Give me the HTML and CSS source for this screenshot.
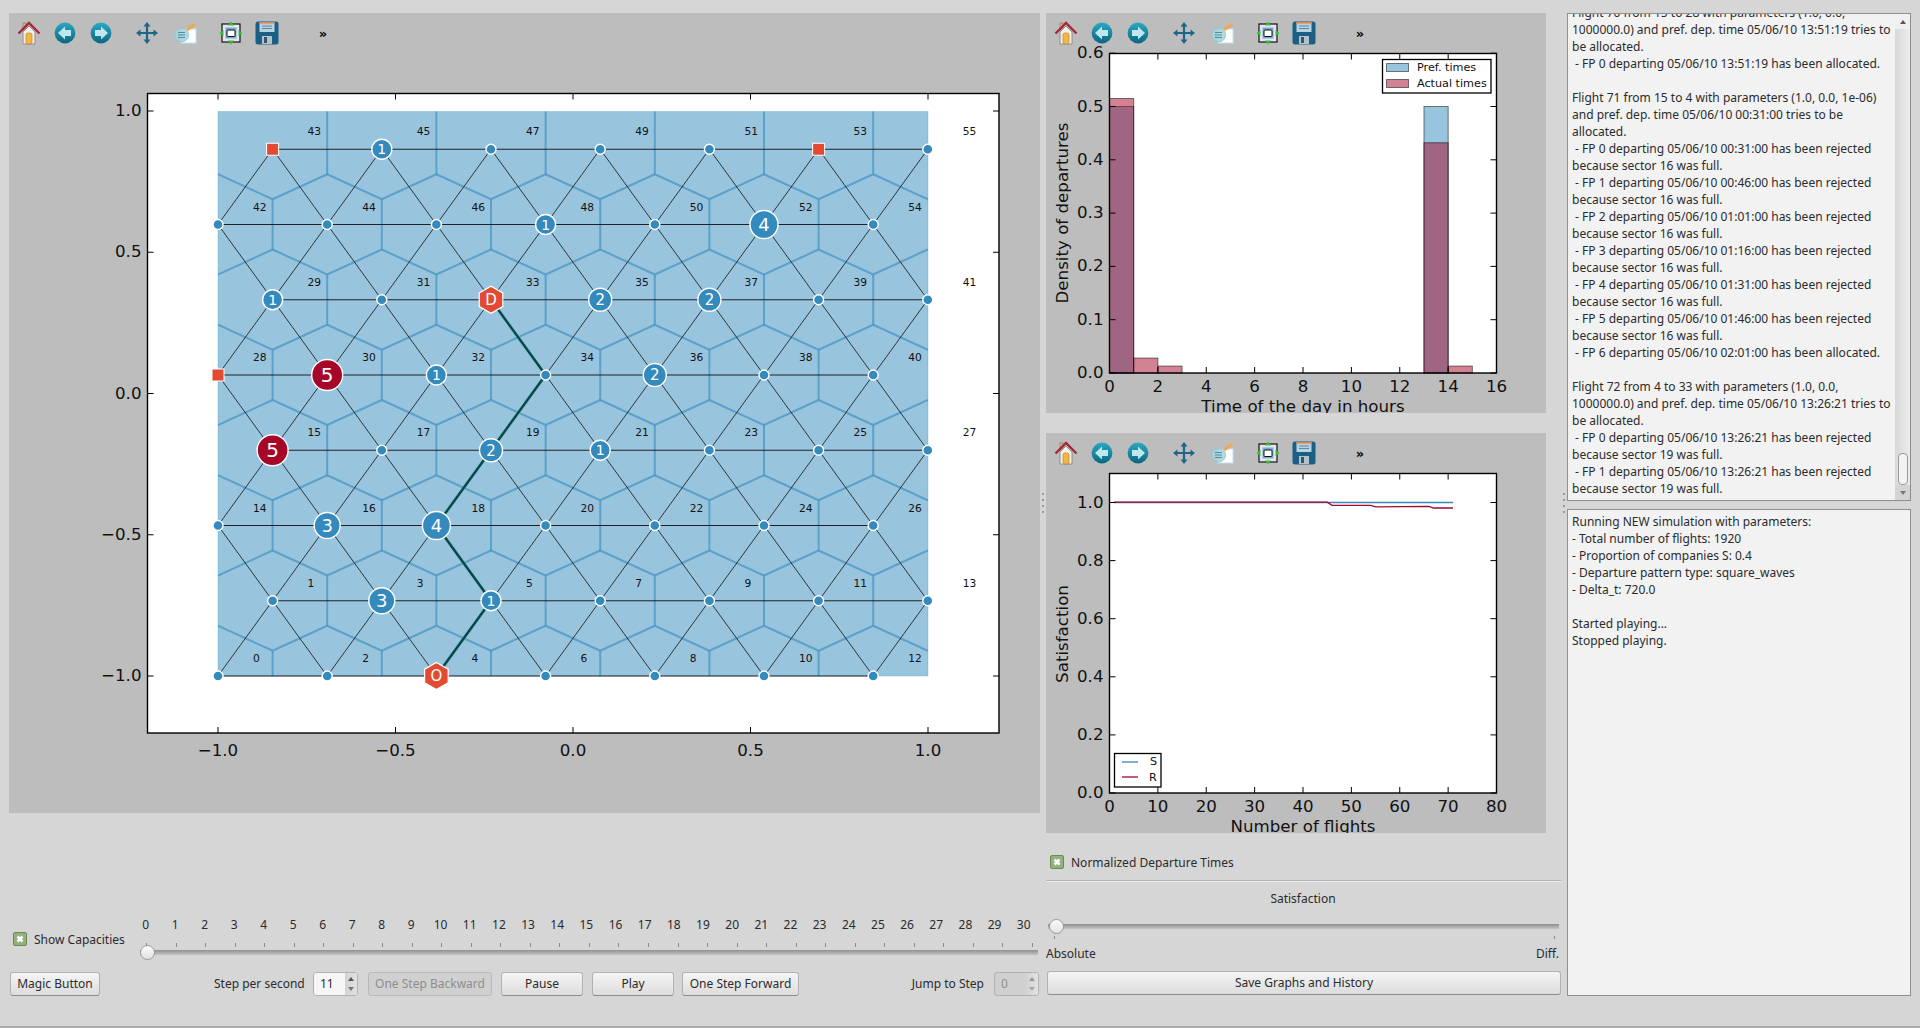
FILE: index.html
```html
<!DOCTYPE html>
<html lang="en">
<head>
    <meta charset="UTF-8">
    <title>Simulation</title>
    <link rel="stylesheet" href="styles.css">
</head>
<body>
<svg class="icon-defs" width="0" height="0">
    <defs>
        <linearGradient id="ballGrad" x1="0" y1="0" x2="0" y2="1">
            <stop offset="0" stop-color="#2aa9c2"/>
            <stop offset="1" stop-color="#0b6680"/>
        </linearGradient>
        <symbol id="i-home" viewBox="0 0 24 24">
            <rect x="6" y="2" width="3" height="7" fill="#d9b98c" stroke="#8a6a4a" stroke-width=".6"/>
            <path d="M6 11 L12 5 L18 11 V23 H6Z" fill="#f2efe6" stroke="#8c8c8c"/>
            <rect x="9" y="12" width="6" height="11" rx="2" fill="#f3b544" stroke="#b9852a" stroke-width=".7"/>
            <path d="M1.5 12.5 L12 2 L22.5 12.5" fill="none" stroke="#a3273f" stroke-width="2.4"/>
        </symbol>
        <symbol id="i-back" viewBox="0 0 24 24">
            <circle cx="12" cy="12" r="10.4" fill="url(#ballGrad)"/>
            <path d="M5 12 L12 5.5 V9 H18 V15 H12 V18.5Z" fill="#bfe7ee"/>
        </symbol>
        <symbol id="i-forward" viewBox="0 0 24 24">
            <circle cx="12" cy="12" r="10.4" fill="url(#ballGrad)"/>
            <path d="M19 12 L12 5.5 V9 H6 V15 H12 V18.5Z" fill="#bfe7ee"/>
        </symbol>
        <symbol id="i-move" viewBox="0 0 24 24">
            <path d="M12 3 V21 M3 12 H21" stroke="#1d6688" stroke-width="2.2"/>
            <path d="M12 1 L15.5 5.5 H8.5Z M12 23 L15.5 18.5 H8.5Z M1 12 L5.5 8.5 V15.5Z M23 12 L18.5 8.5 V15.5Z" fill="#1d6688"/>
        </symbol>
        <symbol id="i-edit" viewBox="0 0 24 24">
            <rect x="8" y="8" width="15" height="14" fill="#fff" stroke="#bfe3f0"/>
            <circle cx="8.5" cy="14" r="7" fill="#a9d4da" stroke="#8ec5d0" opacity=".9"/>
            <path d="M5 11.5 H12 M5 14 H12 M5 16.5 H12" stroke="#4e8ea2" stroke-width="1"/>
            <path d="M14 9 L22 3" stroke="#eea858" stroke-width="3.4"/>
        </symbol>
        <symbol id="i-subplots" viewBox="0 0 24 24">
            <rect x="3" y="3" width="18" height="18" fill="#e4e8ee" stroke="#111" stroke-width="1.2"/>
            <rect x="6.5" y="6.5" width="11" height="11" fill="#7da6d8"/>
            <rect x="8" y="9" width="8" height="6.5" rx="1" fill="#fff" stroke="#111"/>
            <path d="M12 .5 L15 4.5 H9Z M12 23.5 L15 19.5 H9Z M.5 12 L4.5 9 V15Z M23.5 12 L19.5 9 V15Z" fill="#2fc22f"/>
        </symbol>
        <symbol id="i-save" viewBox="0 0 24 24">
            <rect x=".5" y=".5" width="23" height="23" rx="2.5" fill="#1c5f86"/>
            <rect x="4.5" y="1" width="15" height="10" fill="#b9d2e0"/>
            <rect x="4.5" y="1" width="15" height="1.6" fill="#e08a4a"/>
            <path d="M7 5 H17 M7 7.5 H17" stroke="#5a8aa6"/>
            <rect x="7" y="15" width="10" height="8" fill="#b5c2ca"/>
            <rect x="9" y="16" width="3" height="6" fill="#34566c"/>
        </symbol>
        <symbol id="i-check" viewBox="0 0 14 14">
            <rect x=".5" y=".5" width="13" height="13" rx="1.5" fill="#93b27b" stroke="#6b8a58"/>
            <path d="M4.5 4.5 L9.5 9.5 M9.5 4.5 L4.5 9.5" stroke="#fff" stroke-width="2.6"/>
        </symbol>
    </defs>
</svg>

<div class="window">
    <div class="col-left">
        <div class="plot-panel main-panel">
            <div class="toolbar">
                <svg class="tool"><use href="#i-home"/></svg>
                <svg class="tool"><use href="#i-back"/></svg>
                <svg class="tool"><use href="#i-forward"/></svg>
                <svg class="tool gap-big"><use href="#i-move"/></svg>
                <svg class="tool gap-edit"><use href="#i-edit"/></svg>
                <svg class="tool gap-big"><use href="#i-subplots"/></svg>
                <svg class="tool"><use href="#i-save"/></svg>
                <span class="more">»</span>
            </div>
            <svg id="netPlot" class="plot" viewBox="9 53 1031 760" width="1031" height="760"></svg>
        </div>

        <div class="step-row">
            <label class="check check-capacities"><svg class="checkbox"><use href="#i-check"/></svg>Show Capacities</label>
            <div class="step-slider">
                <div class="step-labels" id="stepLabels"></div>
                <div class="step-ticks"></div>
                <div class="slider step-groove"><span class="handle"></span></div>
            </div>
        </div>

        <div class="button-row">
            <button class="btn btn-magic">Magic Button</button>
            <span class="field-label label-step">Step per second</span>
            <div class="spin"><span class="spin-value">11</span><span class="spin-arrows"><i class="up"></i><i class="down"></i></span></div>
            <button class="btn btn-back" disabled>One Step Backward</button>
            <button class="btn btn-pause">Pause</button>
            <button class="btn btn-play">Play</button>
            <button class="btn btn-forward">One Step Forward</button>
            <span class="field-label label-jump">Jump to Step</span>
            <div class="spin spin-off"><span class="spin-value">0</span><span class="spin-arrows"><i class="up"></i><i class="down"></i></span></div>
        </div>
    </div>

    <div class="splitter"></div>

    <div class="col-mid">
        <div class="plot-panel side-panel">
            <div class="toolbar">
                <svg class="tool"><use href="#i-home"/></svg>
                <svg class="tool"><use href="#i-back"/></svg>
                <svg class="tool"><use href="#i-forward"/></svg>
                <svg class="tool gap-big"><use href="#i-move"/></svg>
                <svg class="tool gap-edit"><use href="#i-edit"/></svg>
                <svg class="tool gap-big"><use href="#i-subplots"/></svg>
                <svg class="tool"><use href="#i-save"/></svg>
                <span class="more">»</span>
            </div>
            <svg id="histPlot" class="plot" viewBox="1046 53 500 360" width="500" height="360"></svg>
        </div>
        <div class="plot-panel side-panel second">
            <div class="toolbar">
                <svg class="tool"><use href="#i-home"/></svg>
                <svg class="tool"><use href="#i-back"/></svg>
                <svg class="tool"><use href="#i-forward"/></svg>
                <svg class="tool gap-big"><use href="#i-move"/></svg>
                <svg class="tool gap-edit"><use href="#i-edit"/></svg>
                <svg class="tool gap-big"><use href="#i-subplots"/></svg>
                <svg class="tool"><use href="#i-save"/></svg>
                <span class="more">»</span>
            </div>
            <svg id="satPlot" class="plot" viewBox="1046 473 500 360" width="500" height="360"></svg>
        </div>

        <label class="check check-norm"><svg class="checkbox"><use href="#i-check"/></svg>Normalized Departure Times</label>
        <div class="separator"></div>
        <div class="sat-title">Satisfaction</div>
        <div class="slider sat-groove"><span class="handle"></span></div>
        <div class="sat-ticks"></div>
        <div class="sat-labels"><span>Absolute</span><span>Diff.</span></div>
        <button class="btn btn-save">Save Graphs and History</button>
    </div>

    <div class="splitter"></div>

    <div class="col-right">
        <div class="log-box log-top">
            <div class="log-view"><div class="log-text scrolled">Flight 70 from 15 to 28 with parameters (1.0, 0.0,
1000000.0) and pref. dep. time 05/06/10 13:51:19 tries to
be allocated.
 - FP 0 departing 05/06/10 13:51:19 has been allocated.

Flight 71 from 15 to 4 with parameters (1.0, 0.0, 1e-06)
and pref. dep. time 05/06/10 00:31:00 tries to be
allocated.
 - FP 0 departing 05/06/10 00:31:00 has been rejected
because sector 16 was full.
 - FP 1 departing 05/06/10 00:46:00 has been rejected
because sector 16 was full.
 - FP 2 departing 05/06/10 01:01:00 has been rejected
because sector 16 was full.
 - FP 3 departing 05/06/10 01:16:00 has been rejected
because sector 16 was full.
 - FP 4 departing 05/06/10 01:31:00 has been rejected
because sector 16 was full.
 - FP 5 departing 05/06/10 01:46:00 has been rejected
because sector 16 was full.
 - FP 6 departing 05/06/10 02:01:00 has been allocated.

Flight 72 from 4 to 33 with parameters (1.0, 0.0,
1000000.0) and pref. dep. time 05/06/10 13:26:21 tries to
be allocated.
 - FP 0 departing 05/06/10 13:26:21 has been rejected
because sector 19 was full.
 - FP 1 departing 05/06/10 13:26:21 has been rejected
because sector 19 was full.</div></div>
            <div class="scrollbar">
                <span class="sb-btn"><i class="up"></i></span>
                <span class="sb-track"><span class="sb-thumb"></span></span>
                <span class="sb-btn sb-btn-down"><i class="down"></i></span>
            </div>
        </div>
        <div class="log-box log-bottom">
            <div class="log-text">Running NEW simulation with parameters:
- Total number of flights: 1920
- Proportion of companies S: 0.4
- Departure pattern type: square_waves
- Delta_t: 720.0

Started playing...
Stopped playing.</div>
        </div>
    </div>
</div>
<script src="script.js"></script>
</body>
</html>
```
FILE: styles.css
```css
*{
    box-sizing: border-box;
}
body{
    margin: 0;
    background: #d6d6d6;
    color: #2b2b2b;
    font-family: "Noto Sans", sans-serif;
    font-size: 12px;
    line-height: 17px;
}
.icon-defs{
    display: block;
    height: 0;
}
.window{
    display: flex;
    height: 1028px;
    padding: 13px 9px 0;
    border-bottom: 2px solid #a9a9a9;
}
.col-left{
    width: 1031px;
}
.col-mid{
    width: 515px;
}
.col-right{
    width: 344px;
}
.splitter{
    width: 6px;
    height: 24px;
    margin-top: 480px;
    background: repeating-linear-gradient(#999 0 2px, transparent 2px 6px) center / 2px 100% no-repeat;
}

/* plot panels */
.plot-panel{
    background: #bdbdbd;
    overflow: hidden;
}
.main-panel{
    height: 800px;
}
.side-panel{
    width: 500px;
    height: 400px;
}
.side-panel.second{
    margin-top: 20px;
}
.toolbar{
    display: flex;
    align-items: center;
    height: 40px;
    padding-left: 8px;
}
.tool{
    width: 24px;
    height: 24px;
    margin-left: 12px;
    flex: none;
}
.tool:first-child{
    margin-left: 0;
}
.gap-big{
    margin-left: 22px;
}
.gap-edit{
    margin-left: 14px;
}
.more{
    margin-left: 32px;
    width: 24px;
    text-align: center;
    color: #000;
    font-family: "DejaVu Sans", sans-serif;
    font-size: 13px;
    font-weight: bold;
}
.plot{
    display: block;
    overflow: visible;
    font-family: "DejaVu Sans", sans-serif;
}

/* checkboxes */
.check{
    display: flex;
    align-items: center;
    height: 16px;
    white-space: nowrap;
}
.checkbox{
    width: 14px;
    height: 14px;
    margin-right: 7px;
    flex: none;
}

/* sliders */
.slider{
    height: 15px;
    background: linear-gradient(#8f8f8f, #c4c4c4) center / 100% 5px no-repeat;
}
.handle{
    display: block;
    width: 15px;
    height: 15px;
    border: 1px solid #9a9a9a;
    border-radius: 50%;
    background: linear-gradient(#fbfbfb, #e2e2e2);
}
.step-row{
    display: flex;
    margin-top: 103px;
}
.check-capacities{
    width: 118px;
    margin: 15px 0 0 4px;
    flex: none;
}
.step-slider{
    width: 909px;
}
.step-labels{
    display: flex;
    height: 16px;
}
.step-labels span{
    width: 29.17px;
    text-align: center;
}
.step-labels span:nth-child(-n+10){
    width: 29.5px;
}
.step-ticks{
    height: 4px;
    margin: 11px 6px 0 15px;
    background: repeating-linear-gradient(90deg, #888 0 1px, transparent 1px 29.53px);
}
.step-groove{
    margin: -2px 2px 0 9px;
}

/* buttons */
.button-row{
    display: flex;
    align-items: center;
    height: 24px;
    margin-top: 12px;
}
.btn{
    height: 24px;
    padding: 0 0 1px;
    border: 1px solid #b2b2b2;
    border-bottom-color: #8c8c8c;
    border-radius: 3px;
    background: linear-gradient(#f5f5f5, #dcdcdc);
    color: #2b2b2b;
    font-family: "Noto Sans", sans-serif;
    font-size: 12px;
    flex: none;
}
.btn:disabled{
    border-color: #b8b8b8;
    background: #d0d0d0;
    color: #8e8e8e;
}
.btn-magic{
    width: 90px;
    margin-left: 1px;
}
.btn-back{
    width: 124px;
    margin-left: 10px;
}
.btn-pause,
.btn-play{
    width: 82px;
    margin-left: 9px;
}
.btn-forward{
    width: 117px;
    margin-left: 8px;
}
.btn-save{
    display: block;
    width: 514px;
    margin-left: 1px;
}
.field-label{
    white-space: nowrap;
    padding-bottom: 1px;
}
.label-step{
    width: 90px;
    margin: 0 9px 0 114px;
}
.label-jump{
    margin: 0 10px 0 auto;
}
.spin{
    display: flex;
    width: 45px;
    height: 24px;
    border: 1px solid #b2b2b2;
    border-radius: 3px;
    background: #f6f6f6;
    overflow: hidden;
    flex: none;
}
.spin-value{
    flex: 1;
    padding: 2px 0 0 6px;
}
.spin-arrows{
    display: flex;
    flex-direction: column;
    align-items: center;
    justify-content: center;
    gap: 6px;
    width: 12px;
    background: linear-gradient(90deg, #d2d2d2, #e2e2e2);
}
.spin-off{
    margin-right: 1px;
    background: #d0d0d0;
    color: #8e8e8e;
}
.up,
.down{
    display: block;
    width: 0;
    height: 0;
    border-left: 3px solid transparent;
    border-right: 3px solid transparent;
}
.up{
    border-bottom: 4px solid #555;
}
.down{
    border-top: 4px solid #777;
}
.spin-off .up,
.spin-off .down{
    opacity: .5;
}

/* middle column controls */
.check-norm{
    margin: 21px 0 0 4px;
}
.separator{
    height: 2px;
    margin-top: 10px;
    background: linear-gradient(#b4b4b4 50%, #ececec 50%);
}
.sat-title{
    margin-top: 8px;
    padding-right: 1px;
    text-align: center;
}
.sat-groove{
    margin: 12px 2px 0 2px;
}
.sat-groove .handle{
    margin-left: 1px;
}
.sat-ticks{
    width: 501px;
    height: 3px;
    margin: 2px 0 0 8px;
    border-left: 1px solid #888;
    border-right: 1px solid #888;
}
.sat-labels{
    display: flex;
    justify-content: space-between;
    margin-top: 6px;
    padding-right: 2px;
}
.sat-labels + .btn{
    margin-top: 9px;
}

/* log boxes */
.log-box{
    border: 1px solid #8f8f8f;
    background: #f2f2f2;
    overflow: hidden;
}
.log-top{
    display: flex;
    height: 488px;
}
.log-bottom{
    height: 487px;
    margin-top: 8px;
    padding-top: 3px;
}
.log-view{
    flex: 1;
    overflow: hidden;
}
.log-text{
    padding-left: 4px;
    white-space: pre;
    color: #2b2b2b;
}
.scrolled{
    margin-top: -10px;
}
.scrollbar{
    display: flex;
    flex-direction: column;
    width: 15px;
    background: linear-gradient(90deg, #d8d8d8, #ececec);
}
.sb-btn{
    display: flex;
    align-items: center;
    justify-content: center;
    height: 15px;
    flex: none;
    background: #f0f0f0;
}
.sb-btn-down{
    background: #d4d4d4;
}
.sb-track{
    display: flex;
    flex: 1;
    flex-direction: column;
    justify-content: flex-end;
    align-items: center;
}
.sb-thumb{
    width: 10px;
    height: 32px;
    border: 1px solid #9a9a9a;
    border-radius: 4px;
    background: #f2f2f2;
}
```
FILE: script.js
```js
const NS = "http://www.w3.org/2000/svg";

function add(svg, tag, attrs, text){
    const el = document.createElementNS(NS, tag);
    for (const k in attrs) el.setAttribute(k, attrs[k]);
    if (text !== undefined) el.textContent = text;
    svg.appendChild(el);
    return el;
}

function line(svg, x1, y1, x2, y2, stroke, width, opacity){
    add(svg, "line", {x1, y1, x2, y2, stroke, "stroke-width": width, "stroke-opacity": opacity === undefined ? 1 : opacity});
}

// axes frame, ticks on all four sides, and tick labels
function frame(svg, box, xticks, yticks, tickOff){
    xticks.forEach(t => {
        line(svg, t.at, box.top, t.at, box.top + 6, "#000", 1);
        line(svg, t.at, box.bottom, t.at, box.bottom - 6, "#000", 1);
        add(svg, "text", {x: t.at, y: box.bottom + tickOff, "text-anchor": "middle", "font-size": 16.67, fill: "#111"}, t.label);
    });
    yticks.forEach(t => {
        line(svg, box.left, t.at, box.left + 6, t.at, "#000", 1);
        line(svg, box.right, t.at, box.right - 6, t.at, "#000", 1);
        add(svg, "text", {x: box.left - 6, y: t.at + 5, "text-anchor": "end", "font-size": 16.67, fill: "#111"}, t.label);
    });
    add(svg, "rect", {x: box.left, y: box.top, width: box.right - box.left, height: box.bottom - box.top, fill: "none", stroke: "#000", "stroke-width": 1.4});
}

function drawNetwork(){
    const svg = document.getElementById("netPlot");
    const box = {left: 147.5, right: 999, top: 93.5, bottom: 733};
    add(svg, "rect", {x: box.left, y: box.top, width: box.right - box.left, height: box.bottom - box.top, fill: "#fff"});

    const dx = 109.2, dy = 75.25, x0 = 218, y0 = 676;
    const nodeX = (r, i) => x0 + (r % 2 ? dx / 2 : 0) + i * dx;
    const nodeY = r => y0 - r * dy;

    // sectors
    const clip = add(add(svg, "defs", {}), "clipPath", {id: "sectorClip"});
    add(clip, "rect", {x: 218, y: 111.5, width: 710, height: 564.5});
    add(svg, "rect", {x: 218, y: 111.5, width: 710, height: 564.5, fill: "#348ABD", "fill-opacity": .5, stroke: "#348ABD", "stroke-opacity": .25});
    const cells = add(svg, "g", {"clip-path": "url(#sectorClip)", stroke: "#348ABD", "stroke-opacity": .6, "stroke-width": 2, fill: "none"});
    for (let r = 0; r < 8; r++){
        const y = nodeY(r);
        for (let i = -1; i < 8; i++){
            const mx = nodeX(r, i) + dx / 2;
            // no vertical along the outer border
            if (mx > 222 && mx < 924){
                add(cells, "line", {x1: mx, y1: r === 7 ? y - 50 : y - 25, x2: mx, y2: y + 25});
            }
            if (r === 0) continue;
            add(cells, "line", {x1: mx, y1: y + 25, x2: mx - dx / 2, y2: y + 50});
            add(cells, "line", {x1: mx, y1: y + 25, x2: mx + dx / 2, y2: y + 50});
        }
    }

    // edges
    for (let r = 0; r < 8; r++){
        line(svg, nodeX(r, 0), nodeY(r), nodeX(r, 6), nodeY(r), "#111", 1, .9);
        if (r === 7) continue;
        for (let i = 0; i < 7; i++){
            const x = nodeX(r, i), y = nodeY(r), ny = nodeY(r + 1);
            if (x - dx / 2 >= x0 - 1) line(svg, x, y, x - dx / 2, ny, "#111", 1, .8);
            if (x + dx / 2 <= x0 + 6.5 * dx + 1) line(svg, x, y, x + dx / 2, ny, "#111", 1, .8);
        }
    }

    // route O to D
    const route = [[0, 2], [1, 2], [2, 2], [3, 2], [4, 3], [5, 2]]
        .map(p => nodeX(p[0], p[1]) + "," + nodeY(p[0])).join(" ");
    add(svg, "polyline", {points: route, fill: "none", stroke: "#7fb0b8", "stroke-width": 3.6, "stroke-opacity": .6});
    add(svg, "polyline", {points: route, fill: "none", stroke: "#004a4a", "stroke-width": 2.4});

    // capacities, keyed by row and column
    const caps = {
        "7,1": 1, "6,3": 1, "6,5": 4, "5,0": 1, "5,3": 2, "5,4": 2,
        "4,2": 1, "4,4": 2, "3,2": 2, "3,3": 1,
        "2,1": 3, "2,2": 4, "1,1": 3, "1,2": 1
    };
    const radius = {1: 10, 2: 11.5, 3: 13, 4: 14, 5: 15.5};
    const fontSize = {1: 14, 2: 15, 3: 18, 4: 18, 5: 20};

    const circleNode = (x, y, r, color) => add(svg, "circle", {cx: x, cy: y, r, fill: color, stroke: "#fff", "stroke-width": 1.4});
    const label = (x, y, s, size) => add(svg, "text", {x, y: y + size * .36, "text-anchor": "middle", "font-size": size, fill: "#fff"}, s);

    for (let r = 0; r < 8; r++){
        for (let i = 0; i < 7; i++){
            if (!caps[r + "," + i]) circleNode(nodeX(r, i), nodeY(r), 5, "#348ABD");
        }
    }
    Object.keys(caps).forEach(key => {
        const p = key.split(","), c = caps[key];
        const x = nodeX(+p[0], +p[1]), y = nodeY(+p[0]);
        circleNode(x, y, radius[c], "#348ABD");
        label(x, y, c, fontSize[c]);
    });
    // most loaded sectors
    [[4, 1], [3, 0]].forEach(p => {
        const x = nodeX(p[0], p[1]), y = nodeY(p[0]);
        circleNode(x, y, 15.5, "#A60628");
        label(x, y, 5, 20);
    });
    // airports
    [[7, 0], [7, 5], [4, 0]].forEach(p => {
        const x = nodeX(p[0], p[1]), y = nodeY(p[0]);
        add(svg, "rect", {x: x - 6, y: y - 6, width: 12, height: 12, fill: "#E24A33", stroke: "#fff", "stroke-width": 1});
    });
    [[0, 2, "O"], [5, 2, "D"]].forEach(p => {
        const x = nodeX(p[0], p[1]), y = nodeY(p[0]);
        const pts = [0, 1, 2, 3, 4, 5].map(k => {
            const a = Math.PI / 3 * k;
            return (x + 13.6 * Math.sin(a)) + "," + (y - 13.6 * Math.cos(a));
        }).join(" ");
        add(svg, "polygon", {points: pts, fill: "#E24A33", stroke: "#fff", "stroke-width": 1.2});
        label(x, y, p[2], 15);
    });

    // sector numbers: rows come in pairs, even numbers below, odd above
    for (let r = 0; r < 8; r++){
        for (let i = 0; i < 7; i++){
            const num = Math.floor(r / 2) * 14 + i * 2 + (r % 2);
            const left = 253 + (r % 2 ? dx / 2 : 0) + i * dx;
            add(svg, "text", {x: left, y: nodeY(r) - 14, "font-size": 10.67, fill: "#111"}, num);
        }
    }

    const tickText = v => (v < 0 ? "\u2212" : "") + Math.abs(v).toFixed(1);
    frame(svg, box,
        [-1, -.5, 0, .5, 1].map(v => ({at: 573 + v * 355, label: tickText(v)})),
        [1, .5, 0, -.5, -1].map(v => ({at: 393.5 - v * 282.5, label: tickText(v)})),
        23);
}

function drawHist(){
    const svg = document.getElementById("histPlot");
    const box = {left: 1109.5, right: 1496.5, top: 53.5, bottom: 373};
    const sx = v => box.left + v * 24.19, sy = v => box.bottom - v * 533;
    add(svg, "rect", {x: box.left, y: box.top, width: 387, height: 319.5, fill: "#fff"});

    const bars = (list, color) => list.forEach(b => add(svg, "rect", {
        x: sx(b[0]), y: sy(b[1]), width: 24.19, height: box.bottom - sy(b[1]),
        fill: color, "fill-opacity": .5, stroke: "#000", "stroke-opacity": .5, "stroke-width": 1
    }));
    bars([[0, .5], [13, .5]], "#348ABD");
    bars([[0, .515], [1, .028], [2, .013], [13, .432], [14, .013]], "#A60628");

    frame(svg, box,
        [0, 2, 4, 6, 8, 10, 12, 14, 16].map(v => ({at: sx(v), label: v})),
        [.6, .5, .4, .3, .2, .1, 0].map(v => ({at: sy(v), label: v.toFixed(1)})),
        19);

    add(svg, "rect", {x: 1382.5, y: 59.5, width: 108.5, height: 33.5, fill: "#fff", stroke: "#000", "stroke-width": 1.3});
    add(svg, "rect", {x: 1386.5, y: 63.5, width: 22, height: 8, fill: "#348ABD", "fill-opacity": .5, stroke: "#000", "stroke-opacity": .5});
    add(svg, "rect", {x: 1386.5, y: 79.5, width: 22, height: 8, fill: "#A60628", "fill-opacity": .5, stroke: "#000", "stroke-opacity": .5});
    add(svg, "text", {x: 1417, y: 71, "font-size": 11.2, fill: "#111"}, "Pref. times");
    add(svg, "text", {x: 1417, y: 87, "font-size": 11.2, fill: "#111"}, "Actual times");

    add(svg, "text", {x: 1303, y: 412, "text-anchor": "middle", "font-size": 16.67, fill: "#111"}, "Time of the day in hours");
    add(svg, "text", {transform: "translate(1068 213) rotate(-90)", "text-anchor": "middle", "font-size": 16.67, fill: "#111"}, "Density of departures");
}

function drawSat(){
    const svg = document.getElementById("satPlot");
    const box = {left: 1109.5, right: 1496.5, top: 473.5, bottom: 793};
    const sx = v => box.left + v * 4.8375, sy = v => box.bottom - v * 290.5;
    add(svg, "rect", {x: box.left, y: box.top, width: 387, height: 319.5, fill: "#fff"});

    const poly = (pts, color) => add(svg, "polyline", {
        points: pts.map(p => sx(p[0]) + "," + sy(p[1])).join(" "),
        fill: "none", stroke: color, "stroke-width": 1.3
    });
    poly([[1, 1], [71, 1]], "#348ABD");
    poly([[1, 1.001], [45, 1.001], [46, .99], [54, .99], [55, .985], [66, .987], [67, .981], [71, .981]], "#A60628");

    frame(svg, box,
        [0, 10, 20, 30, 40, 50, 60, 70, 80].map(v => ({at: sx(v), label: v})),
        [1, .8, .6, .4, .2, 0].map(v => ({at: sy(v), label: v.toFixed(1)})),
        19);

    add(svg, "rect", {x: 1114.5, y: 753.5, width: 46.5, height: 33.5, fill: "#fff", stroke: "#000", "stroke-width": 1.3});
    line(svg, 1122, 762, 1138, 762, "#348ABD", 1.3);
    line(svg, 1122, 777, 1138, 777, "#A60628", 1.3);
    add(svg, "text", {x: 1150, y: 765, "font-size": 11.2, fill: "#111"}, "S");
    add(svg, "text", {x: 1149, y: 781, "font-size": 11.2, fill: "#111"}, "R");

    add(svg, "text", {x: 1303, y: 832, "text-anchor": "middle", "font-size": 16.67, fill: "#111"}, "Number of flights");
    add(svg, "text", {transform: "translate(1068 634) rotate(-90)", "text-anchor": "middle", "font-size": 16.67, fill: "#111"}, "Satisfaction");
}

function fillStepLabels(){
    const row = document.getElementById("stepLabels");
    for (let i = 0; i <= 30; i++){
        const s = document.createElement("span");
        s.textContent = i;
        row.appendChild(s);
    }
}

drawNetwork();
drawHist();
drawSat();
fillStepLabels();
```
